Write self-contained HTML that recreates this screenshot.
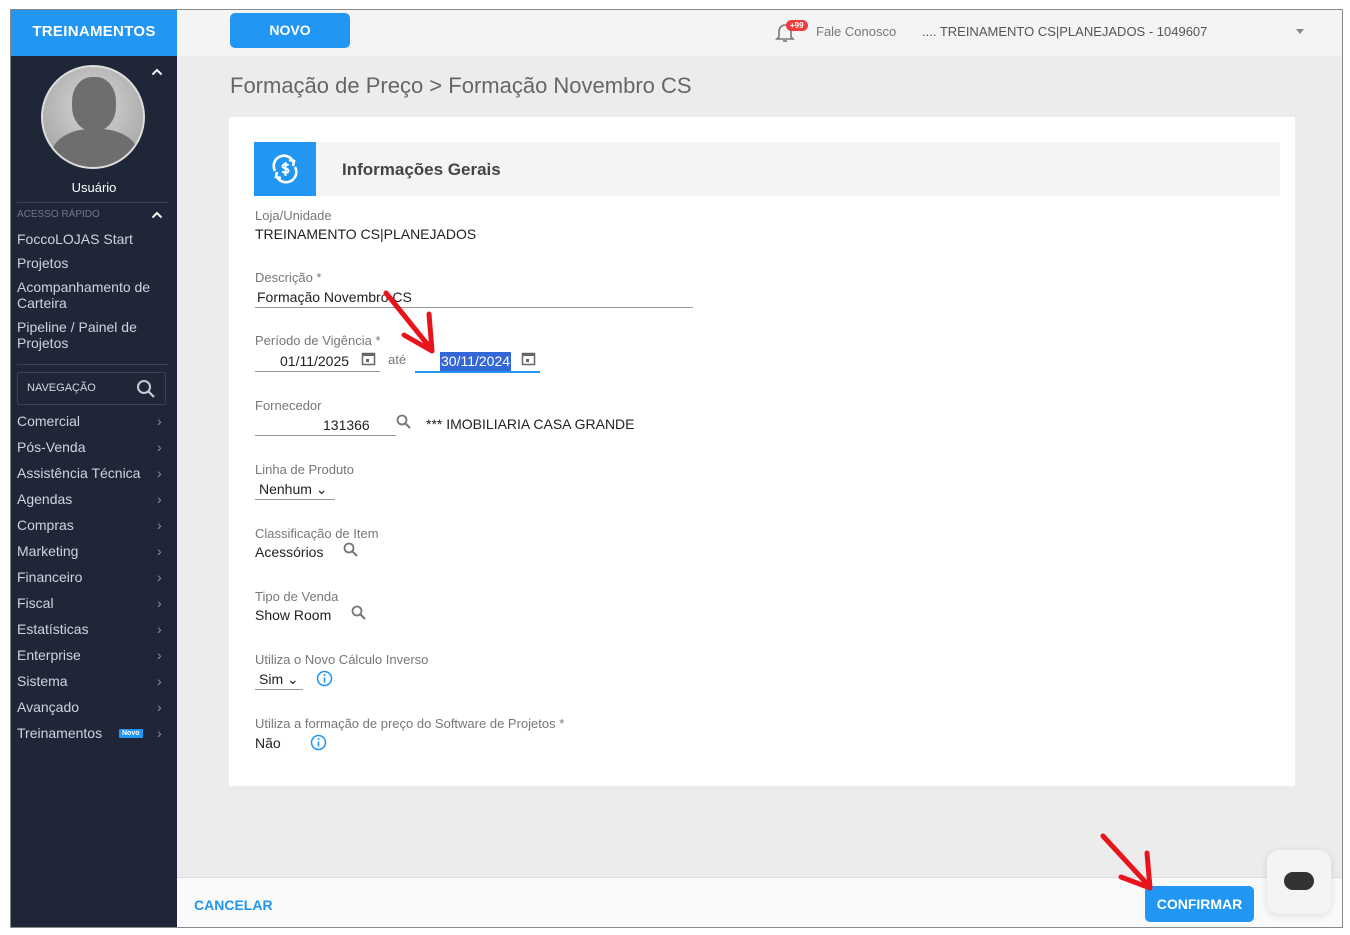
<!DOCTYPE html>
<html><head><meta charset="utf-8"><style>
*{box-sizing:border-box;margin:0;padding:0}
body{width:1350px;height:935px;background:#fff;font-family:"Liberation Sans",sans-serif;position:relative;overflow:hidden}
.frame{position:absolute;left:10px;top:9px;width:1333px;height:919px;border:1px solid #8a8a8a;background:#ececec;overflow:hidden}
.abs{position:absolute}
.side{left:0;top:0;width:166px;height:919px;background:#1e2638}
.brand{left:0;top:0;width:166px;height:46px;background:#2196f3;color:#fff;font-weight:bold;font-size:15px;text-align:center;line-height:43px;letter-spacing:.3px}
.topbar{left:166px;top:0;right:0;height:46px;background:#f4f4f4}
.menu div{position:absolute;left:6px;color:#cfd4dc;font-size:14px}
.menu div span{position:absolute;left:140px;color:#8c94a0}
.lbl{color:#777;font-size:13px;position:absolute}
.val{color:#222;font-size:14px;position:absolute}
.line{position:absolute;height:1px;background:#999}
</style></head><body>
<div class="frame">
 <div class="abs side"></div>
 <div class="abs brand">TREINAMENTOS</div>
 <div class="abs" style="left:30px;top:55px;width:104px;height:104px;border-radius:50%;border:2px solid #ddd;background:radial-gradient(circle at 50% 40%,#d8d8d8,#9a9a9a);overflow:hidden">
  <div class="abs" style="left:29px;top:10px;width:44px;height:54px;border-radius:45%;background:#6e6e6e"></div>
  <div class="abs" style="left:8px;top:62px;width:88px;height:60px;border-radius:45% 45% 0 0;background:#6e6e6e"></div>
 </div>
 <svg class="abs" style="left:140px;top:58px" width="12" height="8" viewBox="0 0 12 8"><path d="M1.5 6.5L6 2l4.5 4.5" fill="none" stroke="#fff" stroke-width="2"/></svg>
 <div class="abs" style="left:0;width:166px;top:170px;text-align:center;color:#fff;font-size:13px">Usuário</div>
 <div class="abs" style="left:6px;top:192px;width:152px;height:1px;background:#3a4356"></div>
 <div class="abs" style="left:6px;top:199px;color:#6f7888;font-size:10px">ACESSO RÁPIDO</div>
 <svg class="abs" style="left:140px;top:201px" width="12" height="8" viewBox="0 0 12 8"><path d="M1.5 6.5L6 2l4.5 4.5" fill="none" stroke="#fff" stroke-width="2"/></svg>
 <div class="menu">
  <div style="top:221px">FoccoLOJAS Start</div>
  <div style="top:245px">Projetos</div>
  <div style="top:269px;line-height:16px">Acompanhamento de<br>Carteira</div>
  <div style="top:309px;line-height:16px">Pipeline / Painel de<br>Projetos</div>
 </div>
 <div class="abs" style="left:6px;top:354px;width:152px;height:1px;background:#3a4356"></div>
 <div class="abs" style="left:6px;top:362px;width:149px;height:33px;border:1px solid #3a4356;border-radius:2px;color:#d3d8df;font-size:11px;line-height:31px;padding-left:9px">NAVEGAÇÃO
  <svg class="abs" style="left:118px;top:6px" width="20" height="20" viewBox="0 0 20 20"><circle cx="8" cy="8" r="6" fill="none" stroke="#c8ccd4" stroke-width="2"/><path d="M12.5 12.5L18 18" stroke="#c8ccd4" stroke-width="2.2"/></svg></div>
 <div class="menu">
  <div style="top:403px">Comercial<span>&#8250;</span></div>
  <div style="top:429px">Pós-Venda<span>&#8250;</span></div>
  <div style="top:455px">Assistência Técnica<span>&#8250;</span></div>
  <div style="top:481px">Agendas<span>&#8250;</span></div>
  <div style="top:507px">Compras<span>&#8250;</span></div>
  <div style="top:533px">Marketing<span>&#8250;</span></div>
  <div style="top:559px">Financeiro<span>&#8250;</span></div>
  <div style="top:585px">Fiscal<span>&#8250;</span></div>
  <div style="top:611px">Estatísticas<span>&#8250;</span></div>
  <div style="top:637px">Enterprise<span>&#8250;</span></div>
  <div style="top:663px">Sistema<span>&#8250;</span></div>
  <div style="top:689px">Avançado<span>&#8250;</span></div>
  <div style="top:715px">Treinamentos<b style="position:absolute;left:102px;top:4px;background:#2196f3;color:#fff;font-size:7px;padding:1px 3px;border-radius:1px">Novo</b><span>&#8250;</span></div>
 </div>

 <div class="abs topbar"></div>
 <div class="abs" style="left:219px;top:3px;width:120px;height:35px;background:#2196f3;border-radius:5px;color:#fff;font-weight:bold;font-size:14px;text-align:center;line-height:35px">NOVO</div>
 <svg class="abs" style="left:764px;top:12px" width="20" height="22" viewBox="0 0 20 22"><path d="M4 15V9a6 6 0 0 1 12 0v6l2 2H2z" fill="none" stroke="#777" stroke-width="1.6"/><path d="M8 19h4" stroke="#777" stroke-width="1.6"/></svg>
 <div class="abs" style="left:775px;top:10px;background:#f03c3c;color:#fff;font-size:8px;border-radius:7px;padding:1px 4px;font-weight:bold">+99</div>
 <div class="abs" style="left:805px;top:14px;color:#777;font-size:13px">Fale Conosco</div>
 <div class="abs" style="left:911px;top:14px;color:#555;font-size:13px">.... TREINAMENTO CS|PLANEJADOS - 1049607</div>
 <div class="abs" style="left:1285px;top:19px;border:4px solid transparent;border-top:5px solid #888"></div>

 <div class="abs" style="left:219px;top:63px;color:#666;font-size:22px">Formação de Preço &gt; Formação Novembro CS</div>

 <div class="abs" style="left:218px;top:107px;width:1066px;height:669px;background:#fff"></div>
 <div class="abs" style="left:243px;top:132px;width:1026px;height:54px;background:#f4f4f4"></div>
 <div class="abs" style="left:243px;top:132px;width:62px;height:54px;background:#2196f3"></div>
 <svg class="abs" style="left:258px;top:143px" width="32" height="32" viewBox="0 0 32 32" fill="none" stroke="#fff" stroke-width="2.6"><path d="M6 18A10 10 0 0 1 24 8"/><path d="M26 14A10 10 0 0 1 8 24"/><path d="M20 7l5 1-1 5M12 25l-5-1 1-5"/><path d="M19.5 12.5c-1-1.5-6-1.8-6 .8s6 1.5 6 4.3-5 2.5-6.3.8M16.5 9v14" stroke-width="2"/></svg>
 <div class="abs" style="left:331px;top:150px;color:#444;font-size:17px;font-weight:bold">Informações Gerais</div>

 <div class="lbl" style="left:244px;top:198px">Loja/Unidade</div>
 <div class="val" style="left:244px;top:216px">TREINAMENTO CS|PLANEJADOS</div>

 <div class="lbl" style="left:244px;top:260px">Descrição *</div>
 <div class="val" style="left:246px;top:279px">Formação Novembro CS</div>
 <div class="line" style="left:244px;top:297px;width:438px"></div>

 <div class="lbl" style="left:244px;top:323px">Período de Vigência *</div>
 <div class="val" style="left:269px;top:343px">01/11/2025</div>
 <svg class="abs" style="left:350px;top:341px" width="15" height="15" viewBox="0 0 15 15"><rect x="1.5" y="2.5" width="12" height="11" fill="none" stroke="#666" stroke-width="1.5"/><rect x="1.5" y="2.5" width="12" height="2.5" fill="#666"/><rect x="5" y="8" width="3" height="3" fill="#666"/></svg>
 <div class="line" style="left:244px;top:361px;width:125px"></div>
 <div class="lbl" style="left:377px;top:342px">até</div>
 <div class="abs" style="left:429px;top:342px;background:#3467d6;color:#fff;font-size:14px;padding:0 1px;height:19px;line-height:19px">30/11/2024</div>
 <svg class="abs" style="left:510px;top:341px" width="15" height="15" viewBox="0 0 15 15"><rect x="1.5" y="2.5" width="12" height="11" fill="none" stroke="#666" stroke-width="1.5"/><rect x="1.5" y="2.5" width="12" height="2.5" fill="#666"/><rect x="5" y="8" width="3" height="3" fill="#666"/></svg>
 <div class="abs" style="left:404px;top:361px;width:125px;height:2px;background:#2196f3"></div>

 <div class="lbl" style="left:244px;top:388px">Fornecedor</div>
 <div class="val" style="left:312px;top:407px">131366</div>
 <div class="line" style="left:244px;top:425px;width:141px"></div>
 <svg class="abs" style="left:385px;top:404px" width="16" height="16" viewBox="0 0 16 16"><circle cx="6" cy="6" r="4.5" fill="none" stroke="#777" stroke-width="1.8"/><path d="M9.5 9.5L14 14" stroke="#777" stroke-width="2"/></svg>
 <div class="val" style="left:415px;top:406px">*** IMOBILIARIA CASA GRANDE</div>

 <div class="lbl" style="left:244px;top:452px">Linha de Produto</div>
 <div class="val" style="left:248px;top:471px">Nenhum &#8964;</div>
 <div class="line" style="left:244px;top:489px;width:80px"></div>

 <div class="lbl" style="left:244px;top:516px">Classificação de Item</div>
 <div class="val" style="left:244px;top:534px">Acessórios</div>
 <svg class="abs" style="left:332px;top:532px" width="16" height="16" viewBox="0 0 16 16"><circle cx="6" cy="6" r="4.5" fill="none" stroke="#777" stroke-width="1.8"/><path d="M9.5 9.5L14 14" stroke="#777" stroke-width="2"/></svg>

 <div class="lbl" style="left:244px;top:579px">Tipo de Venda</div>
 <div class="val" style="left:244px;top:597px">Show Room</div>
 <svg class="abs" style="left:340px;top:595px" width="16" height="16" viewBox="0 0 16 16"><circle cx="6" cy="6" r="4.5" fill="none" stroke="#777" stroke-width="1.8"/><path d="M9.5 9.5L14 14" stroke="#777" stroke-width="2"/></svg>

 <div class="lbl" style="left:244px;top:642px">Utiliza o Novo Cálculo Inverso</div>
 <div class="val" style="left:248px;top:661px">Sim &#8964;</div>
 <div class="line" style="left:244px;top:679px;width:48px"></div>
 <svg class="abs" style="left:305px;top:660px" width="17" height="17" viewBox="0 0 17 17"><circle cx="8.5" cy="8.5" r="7" fill="none" stroke="#2196f3" stroke-width="1.5"/><path d="M8.5 7.5v5" stroke="#2196f3" stroke-width="1.6"/><circle cx="8.5" cy="5" r="1" fill="#2196f3"/></svg>

 <div class="lbl" style="left:244px;top:706px">Utiliza a formação de preço do Software de Projetos *</div>
 <div class="val" style="left:244px;top:725px">Não</div>
 <svg class="abs" style="left:299px;top:724px" width="17" height="17" viewBox="0 0 17 17"><circle cx="8.5" cy="8.5" r="7" fill="none" stroke="#2196f3" stroke-width="1.5"/><path d="M8.5 7.5v5" stroke="#2196f3" stroke-width="1.6"/><circle cx="8.5" cy="5" r="1" fill="#2196f3"/></svg>

 <div class="abs" style="left:166px;top:867px;right:0;height:52px;background:#fafafa;border-top:1px solid #ddd"></div>
 <div class="abs" style="left:183px;top:887px;color:#2196f3;font-weight:bold;font-size:14px">CANCELAR</div>
 <div class="abs" style="left:1134px;top:876px;width:109px;height:36px;background:#2196f3;border-radius:5px;color:#fff;font-weight:bold;font-size:14px;text-align:center;line-height:36px">CONFIRMAR</div>
 <div class="abs" style="left:1256px;top:840px;width:64px;height:64px;background:#f4f4f4;border-radius:12px;box-shadow:0 2px 8px rgba(0,0,0,.12)"></div>
 <div class="abs" style="left:1273px;top:862px;width:30px;height:18px;background:#333;border-radius:9px"></div>

 <svg class="abs" style="left:0;top:0" width="1333" height="919" fill="none" stroke="#e8141c" stroke-width="5" stroke-linecap="round" stroke-linejoin="round">
  <path d="M375 283L421 340"/><path d="M393 325L421 341L418 304"/>
  <path d="M1092 826L1138 876"/><path d="M1110 867L1139 878L1136 843"/>
 </svg>
</div>
</body></html>
